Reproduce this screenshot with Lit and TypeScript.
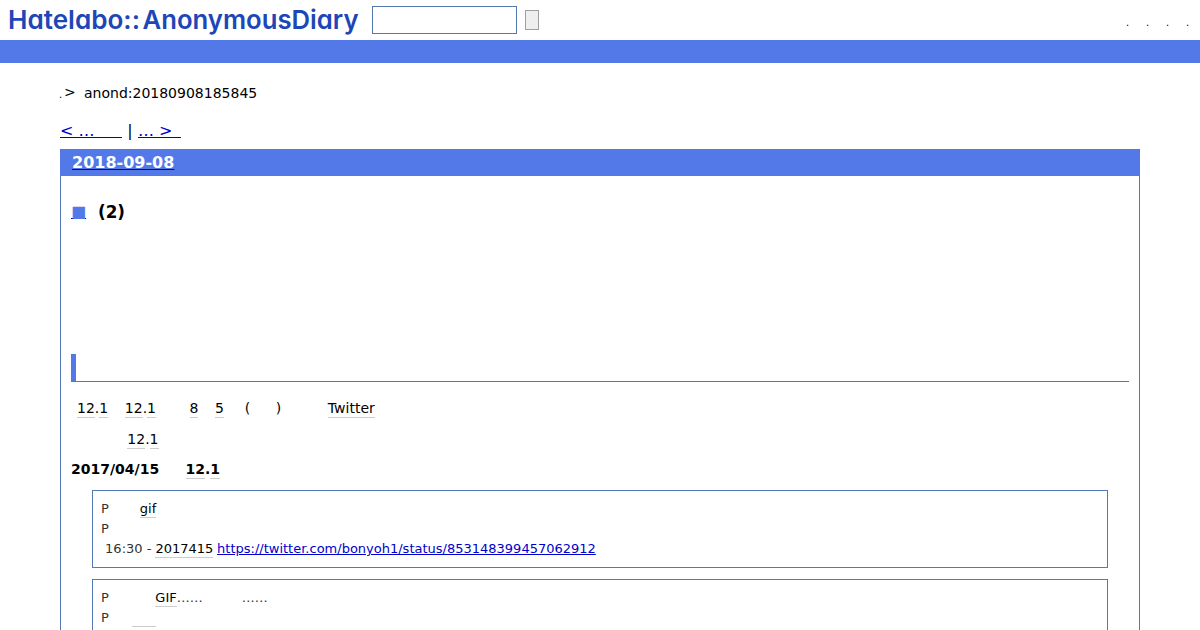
import { LitElement, css, html, nothing } from 'lit'
import { customElement, property } from 'lit/decorators.js';
import { classMap } from 'lit/directives/class-map.js';
import { styleMap } from 'lit/directives/style-map.js';

type Token = {
  text?: string;
  kind?: 'keyword' | 'link' | 'plain';
  // blank space before the token, in pixels
  gap?: number;
  // only for tokens without text
  width?: number;
}

const intro: Token[][] = [
  [
    { text: '12', kind: 'keyword', gap: 6 }, { text: '.' }, { text: '1', kind: 'keyword' },
    { text: '12', kind: 'keyword', gap: 16.6 }, { text: '.' }, { text: '1', kind: 'keyword' },
    { text: '8', kind: 'keyword', gap: 33.5 },
    { text: '5', kind: 'keyword', gap: 16.6 },
    { text: '(', gap: 20.9 },
    { text: ')', gap: 25.5 },
    { text: 'Twitter', kind: 'keyword', gap: 46.6 },
  ],
  [
    { text: '12', kind: 'keyword', gap: 56.3 }, { text: '.' }, { text: '1', kind: 'keyword' },
  ],
];

const heading: Token[] = [
  { text: '2017/04/15' },
  { text: '12', kind: 'keyword', gap: 26.4 }, { text: '.' }, { text: '1', kind: 'keyword' },
];

const quotes: Token[][][] = [
  [
    [{ text: 'P' }, { text: 'gif', kind: 'keyword', gap: 31 }],
    [{ text: 'P' }],
    [
      { text: '16:30 -', gap: 4.1 },
      { text: '2017415', kind: 'keyword', gap: 4.1 },
      { text: 'https://twitter.com/bonyoh1/status/853148399457062912', kind: 'link', gap: 3.7 },
    ],
  ],
  [
    [{ text: 'P' }, { text: 'GIF', kind: 'keyword', gap: 46.5 }, { text: '……' }, { text: '……', gap: 39 }],
    [{ text: 'P' }, { kind: 'keyword', gap: 23.4, width: 24 }],
  ],
];

@customElement('token-line')
export class TokenLine extends LitElement {
  @property({ attribute: false }) tokens: Token[] = [];

  _renderToken(token: Token) {
    const kind = token.kind ?? 'plain';
    const styles: Record<string, string> = {};
    if (token.gap) styles.marginLeft = `${token.gap}px`;
    if (token.width) styles.width = `${token.width}px`;
    if (kind === 'plain') {
      return html`<span style=${styleMap(styles)}>${token.text}</span>`;
    }
    return html`<a class=${classMap({ [kind]: true })} style=${styleMap(styles)}>${token.text ?? nothing}</a>`;
  }

  render() {
    return html`${this.tokens.map(t => this._renderToken(t))}`;
  }

  static styles = css`
    :host {
      display: flex;
      white-space: pre;
    }
    .keyword {
      box-sizing: border-box;
      height: var(--keyword-height, 18px);
      border-bottom: 1px solid #ccc;
      color: #000;
    }
    .link {
      color: #0000cc;
      text-decoration: underline;
    }
  `
}

@customElement('app-root')
export class AppRoot extends LitElement {
  render() {
    return html`
      <header class="header">
        <svg class="logo" width="372" height="40" role="img" aria-label="Hatelabo::AnonymousDiary">
          <text x="8" y="29" textLength="132" lengthAdjust="spacingAndGlyphs">Hatelabo::</text>
          <text x="142.5" y="29" textLength="216" lengthAdjust="spacingAndGlyphs">AnonymousDiary</text>
        </svg>
        <input class="search" type="text" aria-label="search">
        <button class="submit" type="button" aria-label="submit"></button>
        <nav class="menu">${[0, 1, 2, 3].map(() => html`<a>.</a>`)}</nav>
      </header>
      <div class="bar"></div>
      <main class="main">
        <div class="crumbs"><span class="dot">.</span><span class="sep">&gt;</span><span>anond:20180908185845</span></div>
        <div class="pager"><a class="prev">&lt; …</a><span class="pipe">|</span><a class="next">… &gt;</a></div>
        <article class="day">
          <h2 class="date"><a>2018-09-08</a></h2>
          <div class="body">
            <h3 class="title"><a class="mark">■</a><span>(2)</span></h3>
            <h4 class="subtitle"></h4>
            ${intro.map(line => html`<token-line class="para" .tokens=${line}></token-line>`)}
            <token-line class="para strong" .tokens=${heading}></token-line>
            ${quotes.map(quote => html`
              <blockquote class="quote">
                ${quote.map(line => html`<token-line class="quoteline" .tokens=${line}></token-line>`)}
              </blockquote>
            `)}
          </div>
        </article>
      </main>
    `
  }

  static styles = css`
    :host {
      display: block;
      height: 630px;
      overflow: hidden;
      background: #fff;
      color: #000;
      font: 14px/20px "DejaVu Sans", sans-serif;
    }
    .header {
      display: flex;
      align-items: center;
      height: 40px;
    }
    .logo {
      font: 600 26px Inter, sans-serif;
      font-feature-settings: "cv11";
      fill: #1d46b8;
    }
    .search {
      box-sizing: border-box;
      width: 145px;
      height: 28px;
      border: 1px solid #5279ae;
      background: #fff;
    }
    .submit {
      box-sizing: border-box;
      width: 14px;
      height: 20px;
      margin-left: 8px;
      padding: 0;
      border: 1px solid #a0a0a0;
      background: #efefef;
    }
    .menu {
      display: flex;
      margin-left: auto;
      padding: 6px 10px 0 0;
      font-size: 10px;
    }
    .menu a {
      width: 4px;
      margin-left: 16px;
    }
    .bar {
      height: 23px;
      background: #5279e7;
    }
    .main {
      padding: 20px 60px 0;
    }
    .crumbs {
      display: flex;
      height: 20px;
    }
    .dot {
      width: 4px;
      margin-left: -1px;
      margin-right: 1px;
      font-size: 10px;
      line-height: 23px;
    }
    .sep {
      width: 20px;
      line-height: 19px;
    }
    .pager {
      display: flex;
      box-sizing: border-box;
      height: 46px;
      padding-top: 18px;
      font-size: 16px;
    }
    .pager a {
      box-sizing: border-box;
      height: 17px;
      border-bottom: 1px solid #0000cc;
      color: #0000cc;
    }
    .prev {
      width: 62px;
    }
    .pipe {
      width: 16px;
      text-align: center;
    }
    .next {
      width: 42.5px;
    }
    .day {
      border: 1px solid #5279b5;
      border-top: 0;
      height: 600px;
    }
    .date {
      margin: 0 -1px;
      height: 27px;
      padding-left: 12px;
      background: #5279e7;
      color: #fff;
      font-size: 16px;
      line-height: 27px;
    }
    .date a {
      text-decoration: underline #0000cc;
      color: #fff;
    }
    .body {
      padding: 0 10px;
    }
    .title {
      display: flex;
      margin: 0;
      padding-top: 25px;
      font-size: 16.8px;
      line-height: 22px;
    }
    .mark {
      width: 27px;
      color: #5279e7;
      font-size: 16px;
      text-decoration: underline #0000cc;
    }
    .subtitle {
      box-sizing: border-box;
      height: 28px;
      margin: 131px 0 16px;
      border-left: 5px solid #5279e7;
      border-bottom: 1px solid #5279b5;
    }
    .para {
      height: 20px;
      margin-bottom: 11px;
      --keyword-height: 20px;
    }
    .strong {
      margin-top: -1px;
      font-weight: bold;
    }
    .quote {
      box-sizing: border-box;
      height: 78px;
      margin: 0 21px 11px;
      padding: 8px;
      border: 1px solid #5279b5;
      color: #333;
      font-size: 13px;
      --keyword-height: 19px;
    }
    .quoteline {
      height: 20px;
    }
  `
}
